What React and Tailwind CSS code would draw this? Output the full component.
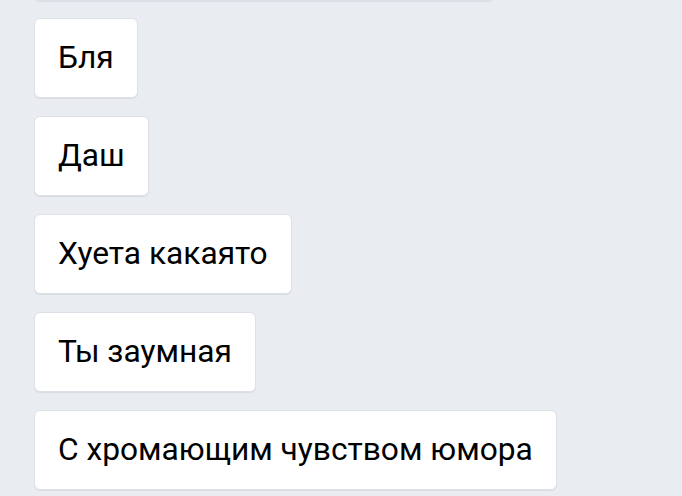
const messages = [
  'Бля',
  'Даш',
  'Хуета какаято',
  'Ты заумная',
  'С хромающим чувством юмора',
];

const bubble =
  'rounded-[6px] border border-[#dde1e7] bg-white shadow-[0_1px_1px_rgba(0,0,0,0.07)]';

export default function App() {
  return (
    <div className="h-[496px] w-[682px] overflow-hidden bg-[#e9edf2]" style={{ fontFamily: 'Roboto, "Noto Sans", sans-serif' }}>
      <div className="mt-[-81px] flex flex-col items-start gap-[17px] pl-[34px]">
        {/* previous message, scrolled out of view */}
        <div className={`${bubble} h-[82px] w-[460px]`} />
        {messages.map((m, i) => (
          <div
            key={i}
            className={`${bubble} mb-px whitespace-nowrap px-[23px] py-[21px] text-[31.7px] leading-[36px] text-black`}
          >
            {m}
          </div>
        ))}
      </div>
    </div>
  );
}
